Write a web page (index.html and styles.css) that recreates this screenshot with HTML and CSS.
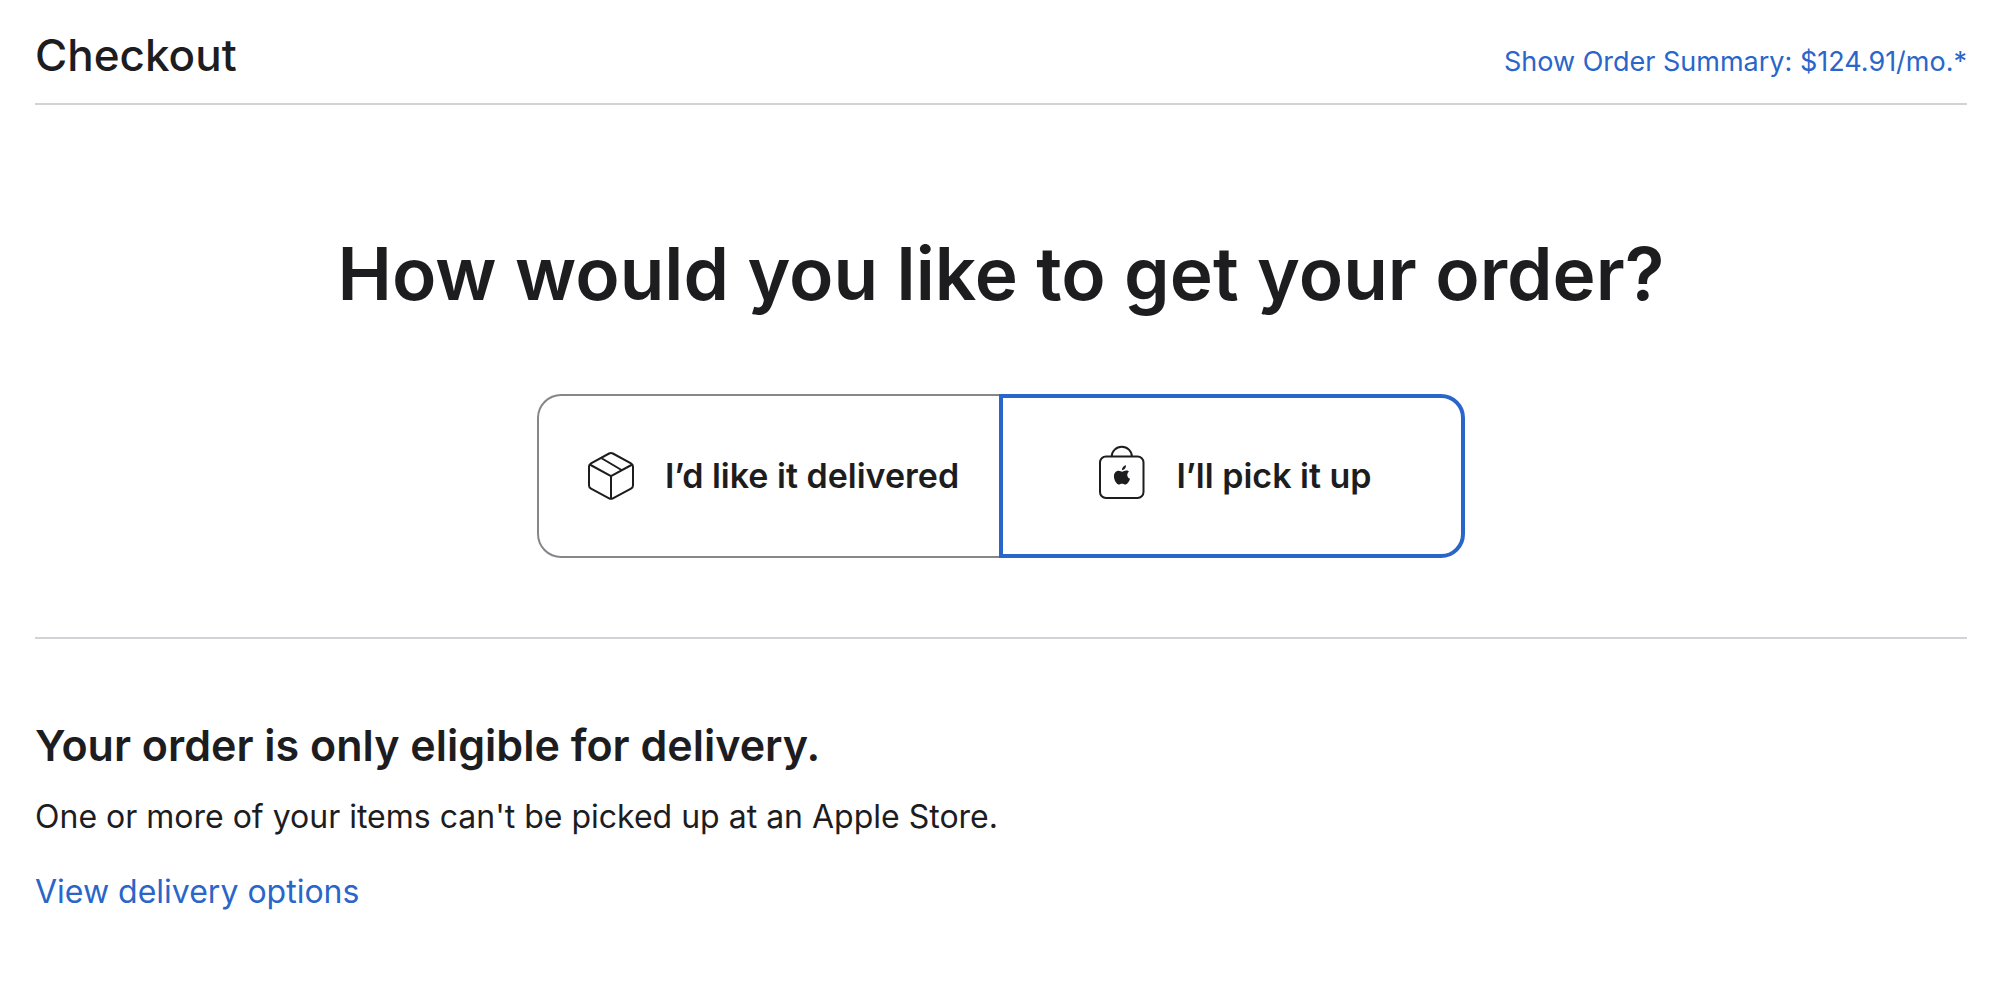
FILE: index.html
```html
<!DOCTYPE html>
<html lang="en">
<head>
<meta charset="utf-8">
<meta name="viewport" content="width=device-width, initial-scale=1">
<title>Checkout</title>
<link rel="stylesheet" href="styles.css">
</head>
<body>
<div class="page">
  <header class="checkout-bar">
    <h2 class="checkout-title">Checkout</h2>
    <a class="link summary-link" href="#summary">Show Order Summary: $124.91/mo.*</a>
  </header>
  <main>
    <form class="fulfillment">
      <h1 class="question" id="question">How would you like to get your order?</h1>
      <div class="options" role="radiogroup" aria-labelledby="question">
        <label class="option">
          <input class="option-input" type="radio" name="fulfillment" value="delivery">
          <svg class="option-icon" viewBox="0 0 48 56" aria-hidden="true">
            <path d="M22.100 5.500Q24 4.500 25.900 5.500L44 15.300Q46 16.400 46 18.500V37.500Q46 39.600 44 40.700L25.900 50.300Q24 51.300 22.100 50.300L4 40.700Q2 39.600 2 37.500V18.500Q2 16.400 4 15.300ZM2.700 16.500L24 28.200L45.300 16.500M24 28.200V51M14.200 10L34.500 22"/>
          </svg>
          <span>I’d like it delivered</span>
        </label>
        <label class="option">
          <input class="option-input" type="radio" name="fulfillment" value="pickup" checked>
          <svg class="option-icon" viewBox="0 0 48 56" aria-hidden="true">
            <rect x="2" y="8.500" width="43.500" height="41.500" rx="6"/>
            <path d="M13.700 8.500A10.100 9.700 0 0 1 33.900 8.500"/>
            <path class="solid" transform="translate(15.800 16.800) scale(.68)" d="M22.300 10.200C20.800 11.100 19.800 12.700 19.800 14.900C19.800 17.500 21.400 19.600 23.900 20.500C22.600 24.200 19.900 28.800 17.200 28.900C15.400 29 14.600 27.800 12.300 27.800C10 27.800 9.100 28.900 7.400 28.900C4.100 29 .2 22.300 .2 16.800C.2 11.700 3.600 8.600 7 8.600C9.300 8.600 11 10.100 12.400 10.100C13.800 10.100 15.900 8.400 18.600 8.500C19.800 8.600 21.800 9 22.300 10.200ZM11.900 8C11.700 4.500 14.600 1.200 17.900 .7C18.300 4.500 15.300 7.900 11.900 8Z"/>
          </svg>
          <span>I’ll pick it up</span>
        </label>
      </div>
    </form>
    <section class="notice">
      <h2 class="notice-title">Your order is only eligible for delivery.</h2>
      <p class="notice-text">One or more of your items can't be picked up at an Apple Store.</p>
      <a class="link notice-link" href="#delivery">View delivery options</a>
    </section>
  </main>
</div>
</body>
</html>
```
FILE: styles.css
```css
* {
  box-sizing: border-box;
}

body {
  margin: 0;
  background: #fff;
  color: #1d1d1f;
  font-family: Inter, "Liberation Sans", sans-serif;
  font-size: 32px;
  line-height: 48px;
}

h1,
h2,
p {
  margin: 0;
}

.page {
  padding: 0 33px 0 35px;
}

.link {
  color: #2a66c9;
  text-decoration: none;
}

.link:hover {
  text-decoration: underline;
}

.checkout-bar {
  display: flex;
  align-items: baseline;
  justify-content: space-between;
  gap: 32px;
  padding: 24px 0 17px;
  border-bottom: 2px solid #d2d2d7;
}

.checkout-title {
  font-size: 44px;
  line-height: 62px;
  font-weight: 500;
}

.summary-link {
  font-size: 27px;
}

.fulfillment {
  padding: 121px 0 79px;
  border-bottom: 2px solid #d2d2d7;
}

.question {
  font-size: 73px;
  line-height: 96px;
  font-weight: 600;
  text-align: center;
}

.options {
  display: grid;
  grid-template-columns: 1fr 1fr;
  max-width: 928px;
  margin: 72px auto 0;
}

.option {
  display: flex;
  align-items: center;
  justify-content: center;
  gap: 30px;
  min-height: 164px;
  padding: 24px 24px 24px 30px;
  border: 2px solid #86868b;
  font-size: 34px;
  font-weight: 600;
  cursor: pointer;
}

.option:first-child {
  border-right: 0;
  border-radius: 24px 0 0 24px;
}

.option:last-child {
  margin-left: -2px;
  border-left: 0;
  border-radius: 0 24px 24px 0;
}

.option:has(:checked) {
  border: 4px solid #2a66c9;
}

.option-input {
  position: absolute;
  opacity: 0;
  pointer-events: none;
}

.option-icon {
  flex: none;
  width: 48px;
  height: 56px;
  overflow: visible;
  fill: none;
  stroke: #1d1d1f;
  stroke-width: 2;
  stroke-linejoin: round;
}

.option-icon .solid {
  fill: #1d1d1f;
  stroke: none;
}

.notice {
  padding: 77px 0;
}

.notice-title {
  font-size: 43px;
  line-height: 58px;
  font-weight: 600;
}

.notice-text {
  margin-top: 19px;
}

.notice-link {
  display: inline-block;
  margin-top: 27px;
}
```
